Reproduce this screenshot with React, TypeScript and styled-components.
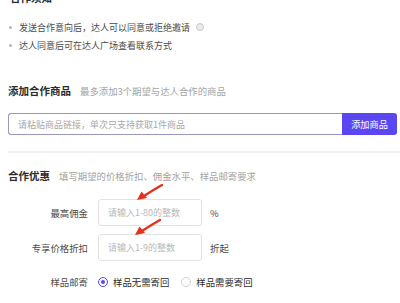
import React from 'react';
import styled, { createGlobalStyle } from 'styled-components';

const GlobalStyle = createGlobalStyle`
  html, body {
    margin: 0;
    padding: 0;
    background: #ffffff;
    overflow: hidden;
  }
  body {
    font-family: "Noto Sans CJK SC", "Noto Sans", sans-serif;
    color: #333;
  }
`;

const colors = {
  primary: '#5b47f2',
  title: '#2b2b2b',
  text: '#4a4a4a',
  muted: '#a3a3a3',
  border: '#e2e2e2',
  divider: '#f1f1f3',
};

const Page = styled.div`
  width: 400px;
  height: 303px;
  overflow: hidden;
  box-sizing: border-box;
  padding: 0 3px 0 8px;
`;

const Section = styled.section<{ $top?: number }>`
  position: relative;
  margin-top: ${(p) => p.$top ?? 0}px;
`;

const SectionHead = styled.div`
  display: flex;
  align-items: baseline;
  gap: 9px;
  height: 18px;
  line-height: 18px;
`;

const SectionTitle = styled.span`
  font-size: 10.5px;
  font-weight: 700;
  color: ${colors.title};
`;

const SectionHint = styled.span`
  font-size: 9.4px;
  color: ${colors.muted};
`;

const CutTitle = styled(SectionTitle)`
  display: block;
  margin-top: -11px;
  height: 18px;
  line-height: 18px;
  padding-left: 2px;
`;

const NoticeList = styled.ul`
  list-style: none;
  margin: 11px 0 0;
  padding: 0;
`;

const NoticeItem = styled.li`
  display: flex;
  align-items: center;
  height: 18px;
  font-size: 9px;
  color: ${colors.text};
  &::before {
    content: '';
    width: 3px;
    height: 3px;
    border-radius: 50%;
    background: #b5b5b5;
    margin: 0 7px 0 1px;
  }
`;

const InfoDot = styled.span`
  display: inline-block;
  width: 6px;
  height: 6px;
  border-radius: 50%;
  border: 1px solid #c8c8c8;
  background: #ececec;
  margin-left: 6px;
`;

const LinkGroup = styled.div`
  display: flex;
  height: 22px;
  margin-top: 13px;
`;

const LinkInput = styled.input`
  flex: 1;
  min-width: 0;
  box-sizing: border-box;
  border: 1px solid #9c98bd;
  border-right: none;
  border-radius: 3px 0 0 3px;
  padding: 0 9px;
  font-family: inherit;
  font-size: 9px;
  color: ${colors.text};
  outline: none;
  &::placeholder {
    color: #a8a8a8;
  }
`;

const AddButton = styled.button`
  width: 55px;
  border: none;
  border-radius: 0 3px 3px 0;
  background: ${colors.primary};
  color: #fff;
  font-family: inherit;
  font-size: 9.2px;
  padding: 0;
`;

const Divider = styled.div`
  height: 2px;
  background: ${colors.divider};
  margin: 16px -3px 0 0;
`;

const FormGrid = styled.div`
  display: grid;
  grid-template-columns: 80px auto;
  column-gap: 10px;
  row-gap: 8px;
  margin-top: 14px;
  align-items: center;
`;

const FieldLabel = styled.label`
  text-align: right;
  font-size: 9.4px;
  color: ${colors.text};
`;

const FieldControl = styled.div`
  display: flex;
  align-items: center;
  gap: 8px;
  font-size: 9.4px;
  color: ${colors.text};
`;

const NumberInput = styled.input`
  width: 104px;
  height: 27px;
  box-sizing: border-box;
  border: 1px solid ${colors.border};
  border-radius: 3px;
  padding: 0 9px;
  font-family: inherit;
  font-size: 9px;
  outline: none;
  &::placeholder {
    color: #b8b8b8;
  }
`;

const RadioRow = styled.div`
  display: flex;
  align-items: center;
  height: 26px;
`;

const RadioOption = styled.label`
  display: flex;
  align-items: center;
  gap: 5px;
  font-size: 9.4px;
  color: ${colors.title};
  margin-right: 12px;
`;

const RadioMark = styled.span<{ $checked?: boolean }>`
  position: relative;
  width: 10px;
  height: 10px;
  box-sizing: border-box;
  border-radius: 50%;
  border: 1px solid ${(p) => (p.$checked ? colors.primary : '#cfcfcf')};
  background: #fff;
  &::after {
    content: '';
    display: ${(p) => (p.$checked ? 'block' : 'none')};
    position: absolute;
    left: 2px;
    top: 2px;
    width: 4px;
    height: 4px;
    border-radius: 50%;
    background: ${colors.primary};
  }
`;

const Pointer = styled.svg<{ $x: number; $y: number }>`
  position: absolute;
  left: ${(p) => p.$x}px;
  top: ${(p) => p.$y}px;
  overflow: visible;
`;

// red annotation arrow drawn over the form
const Arrow: React.FC<{ x: number; y: number }> = ({ x, y }) => (
  <Pointer $x={x} $y={y} width="28" height="18" viewBox="0 0 28 18">
    <path d="M26 1 Q17 6 8 12" stroke="#e2311d" strokeWidth="2.4" fill="none" strokeLinecap="round" />
    <path d="M1 16 L5.5 7.5 L11 14 Z" fill="#e2311d" />
  </Pointer>
);

const App: React.FC = () => (
  <Page>
    <GlobalStyle />
    <Section>
      <CutTitle>合作须知</CutTitle>
      <NoticeList>
        <NoticeItem>
          发送合作意向后，达人可以同意或拒绝邀请
          <InfoDot />
        </NoticeItem>
        <NoticeItem>达人同意后可在达人广场查看联系方式</NoticeItem>
      </NoticeList>
    </Section>

    <Section $top={28}>
      <SectionHead>
        <SectionTitle>添加合作商品</SectionTitle>
        <SectionHint>最多添加3个期望与达人合作的商品</SectionHint>
      </SectionHead>
      <LinkGroup>
        <LinkInput placeholder="请粘贴商品链接，单次只支持获取1件商品" />
        <AddButton>添加商品</AddButton>
      </LinkGroup>
    </Section>

    <Divider />

    <Section $top={14}>
      <SectionHead>
        <SectionTitle>合作优惠</SectionTitle>
        <SectionHint>填写期望的价格折扣、佣金水平、样品邮寄要求</SectionHint>
      </SectionHead>
      <FormGrid>
        <FieldLabel>最高佣金</FieldLabel>
        <FieldControl>
          <NumberInput placeholder="请输入1-80的整数" />
          %
        </FieldControl>
        <FieldLabel>专享价格折扣</FieldLabel>
        <FieldControl>
          <NumberInput placeholder="请输入1-9的整数" />
          折起
        </FieldControl>
        <FieldLabel>样品邮寄</FieldLabel>
        <RadioRow>
          <RadioOption>
            <RadioMark $checked />
            样品无需寄回
          </RadioOption>
          <RadioOption>
            <RadioMark />
            样品需要寄回
          </RadioOption>
        </RadioRow>
      </FormGrid>
      <Arrow x={128} y={17} />
      <Arrow x={126} y={52} />
    </Section>
  </Page>
);

export default App;
